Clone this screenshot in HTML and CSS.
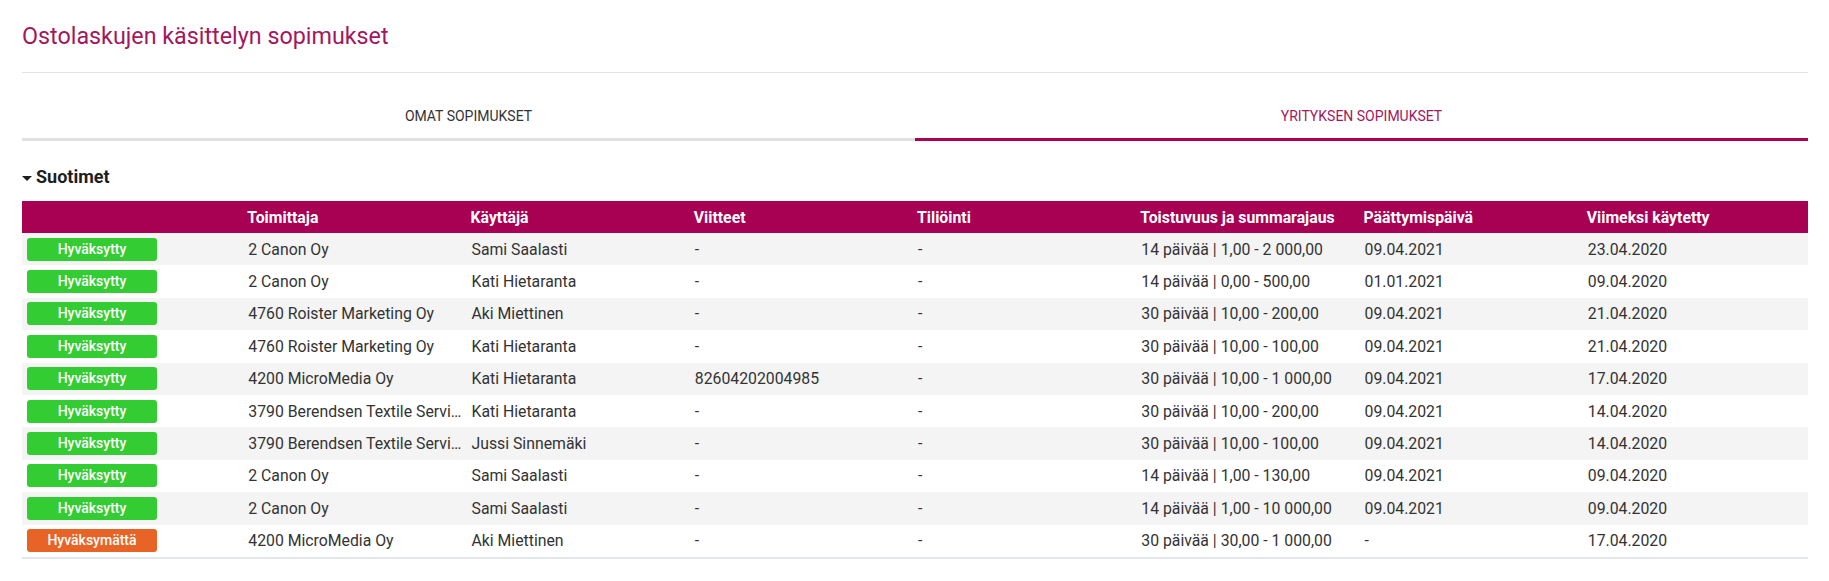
FILE: index.html
```html
<!DOCTYPE html>
<html lang="fi">
  <head>
    <meta charset="UTF-8" />
    <meta name="viewport" content="width=device-width, initial-scale=1.0" />
    <title>Ostolaskujen käsittelyn sopimukset</title>
    <link rel="stylesheet" href="styles.css">
  </head>
  <body>
    <div class="page">
      <h1 class="page-title">Ostolaskujen käsittelyn sopimukset</h1>

      <!-- Tabs -->
      <div class="tabs">
        <div class="tab">OMAT SOPIMUKSET</div>
        <div class="tab active">YRITYKSEN SOPIMUKSET</div>
      </div>

      <div class="filters">
        <span class="caret"></span>
        <span>Suotimet</span>
      </div>

      <table class="contracts">
        <thead>
          <tr>
            <th></th>
            <th>Toimittaja</th>
            <th>Käyttäjä</th>
            <th>Viitteet</th>
            <th>Tiliöinti</th>
            <th>Toistuvuus ja summarajaus</th>
            <th>Päättymispäivä</th>
            <th>Viimeksi käytetty</th>
          </tr>
        </thead>
        <tbody>
          <tr>
            <td><span class="badge ok">Hyväksytty</span></td>
            <td>2 Canon Oy</td>
            <td>Sami Saalasti</td>
            <td>-</td>
            <td>-</td>
            <td>14 päivää | 1,00 - 2 000,00</td>
            <td>09.04.2021</td>
            <td>23.04.2020</td>
          </tr>
          <tr>
            <td><span class="badge ok">Hyväksytty</span></td>
            <td>2 Canon Oy</td>
            <td>Kati Hietaranta</td>
            <td>-</td>
            <td>-</td>
            <td>14 päivää | 0,00 - 500,00</td>
            <td>01.01.2021</td>
            <td>09.04.2020</td>
          </tr>
          <tr>
            <td><span class="badge ok">Hyväksytty</span></td>
            <td>4760 Roister Marketing Oy</td>
            <td>Aki Miettinen</td>
            <td>-</td>
            <td>-</td>
            <td>30 päivää | 10,00 - 200,00</td>
            <td>09.04.2021</td>
            <td>21.04.2020</td>
          </tr>
          <tr>
            <td><span class="badge ok">Hyväksytty</span></td>
            <td>4760 Roister Marketing Oy</td>
            <td>Kati Hietaranta</td>
            <td>-</td>
            <td>-</td>
            <td>30 päivää | 10,00 - 100,00</td>
            <td>09.04.2021</td>
            <td>21.04.2020</td>
          </tr>
          <tr>
            <td><span class="badge ok">Hyväksytty</span></td>
            <td>4200 MicroMedia Oy</td>
            <td>Kati Hietaranta</td>
            <td>82604202004985</td>
            <td>-</td>
            <td>30 päivää | 10,00 - 1 000,00</td>
            <td>09.04.2021</td>
            <td>17.04.2020</td>
          </tr>
          <tr>
            <td><span class="badge ok">Hyväksytty</span></td>
            <td>3790 Berendsen Textile Service Oy</td>
            <td>Kati Hietaranta</td>
            <td>-</td>
            <td>-</td>
            <td>30 päivää | 10,00 - 200,00</td>
            <td>09.04.2021</td>
            <td>14.04.2020</td>
          </tr>
          <tr>
            <td><span class="badge ok">Hyväksytty</span></td>
            <td>3790 Berendsen Textile Service Oy</td>
            <td>Jussi Sinnemäki</td>
            <td>-</td>
            <td>-</td>
            <td>30 päivää | 10,00 - 100,00</td>
            <td>09.04.2021</td>
            <td>14.04.2020</td>
          </tr>
          <tr>
            <td><span class="badge ok">Hyväksytty</span></td>
            <td>2 Canon Oy</td>
            <td>Sami Saalasti</td>
            <td>-</td>
            <td>-</td>
            <td>14 päivää | 1,00 - 130,00</td>
            <td>09.04.2021</td>
            <td>09.04.2020</td>
          </tr>
          <tr>
            <td><span class="badge ok">Hyväksytty</span></td>
            <td>2 Canon Oy</td>
            <td>Sami Saalasti</td>
            <td>-</td>
            <td>-</td>
            <td>14 päivää | 1,00 - 10 000,00</td>
            <td>09.04.2021</td>
            <td>09.04.2020</td>
          </tr>
          <tr>
            <td><span class="badge pending">Hyväksymättä</span></td>
            <td>4200 MicroMedia Oy</td>
            <td>Aki Miettinen</td>
            <td>-</td>
            <td>-</td>
            <td>30 päivää | 30,00 - 1 000,00</td>
            <td>-</td>
            <td>17.04.2020</td>
          </tr>
        </tbody>
      </table>
    </div>
  </body>
</html>
```

FILE: styles.css
```css
body {
  font-family: Roboto, "Liberation Sans", sans-serif;
  margin: 0;
  background: #fff;
  color: #333;
}
.page {
  padding: 0 21px 0 22px;
}
.page-title {
  margin: 0;
  padding: 22px 0 22px;
  font-size: 23.3px;
  line-height: 28px;
  font-weight: 400;
  color: #a3175c;
  border-bottom: 1px solid #e2e2e2;
}

/* Tabs */
.tabs {
  display: flex;
}
.tab {
  flex: 1;
  text-align: center;
  padding: 35px 0 14px;
  font-size: 14px;
  line-height: 16px;
  color: #333;
  border-bottom: 3px solid #e0e0e0;
}
.tab.active {
  color: #a3175c;
  border-bottom-color: #ab0054;
}

.filters {
  display: flex;
  align-items: center;
  gap: 4px;
  margin: 25px 0 13px;
  font-size: 18px;
  line-height: 22px;
  font-weight: 700;
  color: #1e1e1e;
}
.caret {
  width: 0;
  height: 0;
  border-left: 5.5px solid transparent;
  border-right: 5.5px solid transparent;
  border-top: 5px solid #1e1e1e;
  margin-top: 2px;
}

/* Table */
.contracts {
  width: 100%;
  border-collapse: collapse;
  table-layout: fixed;
  font-size: 15.8px;
  border-bottom: 2px solid #e3e6ea;
}
.contracts th {
  background: #a80052;
  color: #fff;
  font-weight: 700;
  text-align: left;
  height: 32px;
  padding: 0 2px;
  white-space: nowrap;
}
.contracts td {
  height: 32.4px;
  padding: 0 3px;
  white-space: nowrap;
  overflow: hidden;
  text-overflow: ellipsis;
}
.contracts td:first-child {
  padding-left: 5px;
}
.contracts tbody tr:nth-child(odd) {
  background: #f4f4f4;
}
.badge {
  display: block;
  width: 130px;
  height: 23px;
  line-height: 23px;
  border-radius: 3px;
  text-align: center;
  color: #fff;
  font-size: 14px;
  font-weight: 500;
}
.badge.ok {
  background: #33cc33;
}
.badge.pending {
  background: #e86426;
}
```
